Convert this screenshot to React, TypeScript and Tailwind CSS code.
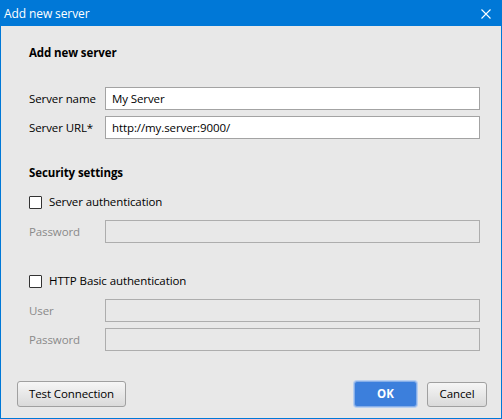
import React from "react";

const font = { fontFamily: '"Open Sans", "Noto Sans", sans-serif' };

function TextInput({ value, disabled }: { value?: string; disabled?: boolean }) {
  return (
    <div
      className={
        "flex-1 h-[23px] border flex items-center pl-[6px] text-[11.5px] tracking-[-0.1px] " +
        (disabled ? "bg-[#e8e8e8] border-[#adadad]" : "bg-white border-[#a3a3a3] text-black")
      }
    >
      {value}
    </div>
  );
}

function Row({ label, value, disabled, className }: { label: string; value?: string; disabled?: boolean; className?: string }) {
  return (
    <div className={"flex items-center " + (className ?? "")}>
      <div className={"w-[76px] text-[11.5px] tracking-[-0.1px] " + (disabled ? "text-[#8a8a8a]" : "text-black")}>{label}</div>
      <TextInput value={value} disabled={disabled} />
    </div>
  );
}

function Check({ label, className }: { label: string; className?: string }) {
  return (
    <div className={"flex items-center h-[16px] " + (className ?? "")}>
      <div className="w-[13px] h-[13px] border border-[#333333] bg-white rounded-[1px]" />
      <span className="ml-[7px] text-[11.5px] tracking-[-0.1px] text-black">{label}</span>
    </div>
  );
}

export default function App() {
  return (
    <div className="w-[502px] h-[419px] border border-[#0078d7] bg-[#e8e8e8] flex flex-col" style={font}>
      <div className="h-[25px] bg-[#0078d7] flex items-center justify-between">
        <span className="pl-[3px] text-white text-[12px] tracking-[-0.1px]">Add new server</span>
        <svg width="10" height="10" viewBox="0 0 10 10" className="mr-[10px]">
          <path d="M0.5 0.5 L9.5 9.5 M9.5 0.5 L0.5 9.5" stroke="white" strokeWidth="1.1" />
        </svg>
      </div>
      <div className="flex-1 flex flex-col pl-[28px] pr-[21px] pt-[19px]">
        <div className="h-[16px] leading-[16px] text-[11.5px] tracking-[-0.1px] font-bold text-black">Add new server</div>
        <Row className="mt-[26px]" label="Server name" value="My Server" />
        <Row className="mt-[6px]" label="Server URL*" value="http://my.server:9000/" />
        <div className="mt-[26px] h-[16px] leading-[16px] text-[11.5px] tracking-[-0.1px] font-bold text-black">Security settings</div>
        <Check className="mt-[13px]" label="Server authentication" />
        <Row className="mt-[10px]" label="Password" disabled />
        <Check className="mt-[30px]" label="HTTP Basic authentication" />
        <Row className="mt-[10px]" label="User" disabled />
        <Row className="mt-[6px]" label="Password" disabled />
      </div>
      <div className="flex items-center pl-[16px] pr-[14px] pb-[11px]">
        <button className="w-[109px] h-[26px] border border-[#a0a0a0] rounded-[3px] bg-gradient-to-b from-[#f6f6f6] to-[#dadada] text-[11.5px] tracking-[-0.1px] text-black">
          Test Connection
        </button>
        <div className="flex-1" />
        <button className="w-[63px] h-[26px] border border-[#86aee8] rounded-[3px] bg-[#3c7fdc] text-[11.5px] font-bold text-white shadow-[0_0_0_1px_#b8cff0]">
          OK
        </button>
        <button className="ml-[10px] w-[60px] h-[25px] border border-[#a0a0a0] rounded-[3px] bg-gradient-to-b from-[#f6f6f6] to-[#dadada] text-[11.5px] tracking-[-0.1px] text-black">
          Cancel
        </button>
      </div>
    </div>
  );
}
